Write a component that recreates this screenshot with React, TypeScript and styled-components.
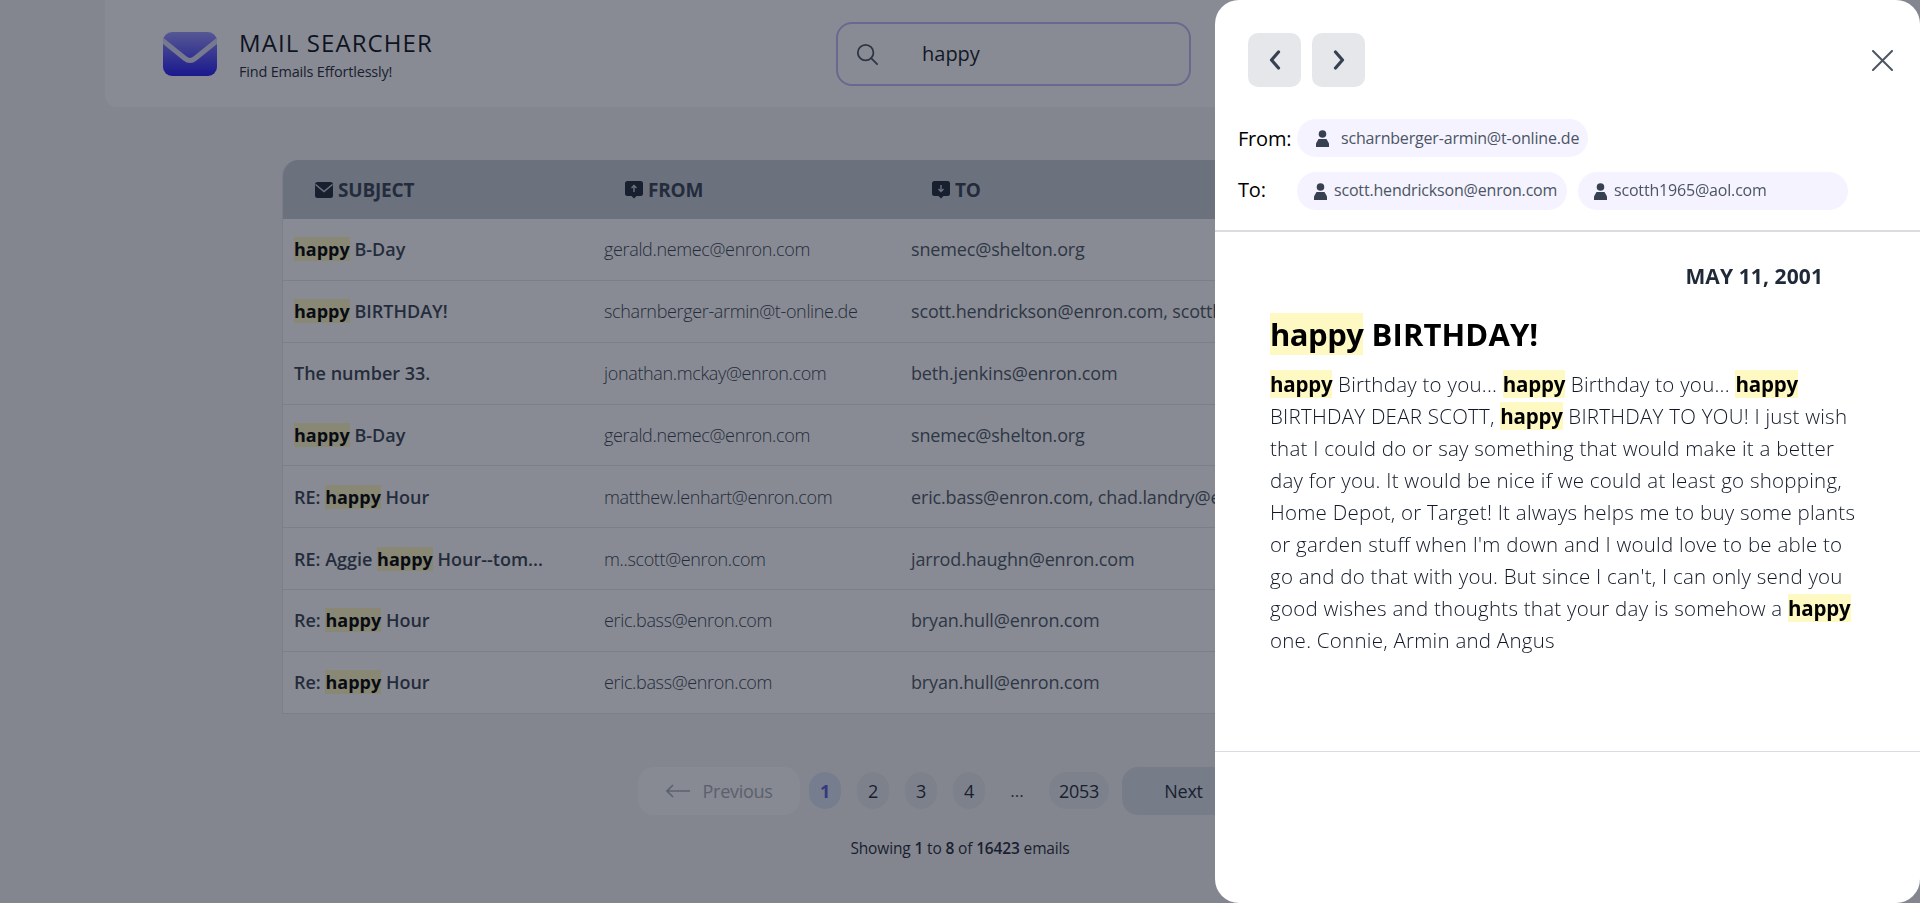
import React from 'react'
import styled, { createGlobalStyle } from 'styled-components'

const GlobalStyle = createGlobalStyle`
  html, body {
    margin: 0;
    height: 100%;
    overflow: hidden;
    background: #f5f5f7;
    font-family: 'Open Sans', 'Noto Sans', sans-serif;
    color: #374151;
  }
  * { box-sizing: border-box; }
`

const Page = styled.div`
  display: flex;
  flex-direction: column;
  align-items: center;
  height: 903px;
`

const TopBar = styled.header`
  width: 1710px;
  height: 107px;
  flex: none;
  display: flex;
  align-items: center;
  background: #fff;
  border-radius: 0 0 12px 12px;
  padding: 0 58px;
`

const Brand = styled.div`
  display: flex;
  align-items: center;
  gap: 22px;
  width: 673px;
`

const BrandText = styled.div`
  display: flex;
  flex-direction: column;
  gap: 4px;
  padding-top: 3px;
`

const BrandTitle = styled.div`
  font-size: 24px;
  line-height: 30px;
  font-weight: 500;
  letter-spacing: 1.1px;
  color: #0b0f19;
`

const BrandTagline = styled.div`
  font-size: 14.5px;
  line-height: 20px;
  letter-spacing: -0.2px;
  color: #1f2937;
`

const SearchBox = styled.div`
  width: 355px;
  height: 64px;
  display: flex;
  align-items: center;
  gap: 44px;
  padding-left: 18px;
  border: 2px solid #c0b9f5;
  border-radius: 16px;
  font-size: 20px;
  color: #111827;
  svg { flex: none; }
`

const TableCard = styled.section`
  width: 1356px;
  flex: none;
  margin-top: 53px;
  border-radius: 16px 16px 0 0;
  border-left: 1px solid #e5e7eb;
  overflow: hidden;
`

const columns = '310px 307px 1fr'

const HeadRow = styled.div`
  display: grid;
  grid-template-columns: ${columns};
  height: 59px;
  background: #c5ccd5;
  align-items: center;
`

const HeadCell = styled.div`
  display: flex;
  align-items: center;
  gap: 5px;
  padding: 1px 0 0 32px;
  font-size: 19px;
  font-weight: 700;
  letter-spacing: -0.2px;
  color: #374151;
`

const Row = styled.div`
  display: grid;
  grid-template-columns: ${columns};
  height: 61.85px;
  align-items: center;
  background: #fff;
  border-bottom: 1px solid #e5e7eb;
`

const SubjectCell = styled.div`
  padding-left: 11px;
  font-size: 18px;
  font-weight: 600;
  color: #374151;
  white-space: nowrap;
`

const Hit = styled.mark`
  background: #fef9c3;
  color: #000;
  font-weight: 700;
`

const FromCell = styled.div`
  padding-left: 11px;
  font-size: 18px;
  font-weight: 300;
  letter-spacing: -0.35px;
  color: #374151;
  white-space: nowrap;
`

const ToCell = styled.div`
  padding-left: 11px;
  font-size: 18px;
  letter-spacing: -0.16px;
  color: #4b5563;
  white-space: nowrap;
  overflow: hidden;
`

const Pager = styled.nav`
  display: flex;
  align-items: center;
  margin-top: 53px;
`

const PagerEdge = styled.div<{ $faded?: boolean }>`
  width: ${({ $faded }) => ($faded ? '162px' : '160px')};
  height: 48px;
  display: flex;
  align-items: center;
  justify-content: center;
  gap: 13px;
  font-size: 18px;
  letter-spacing: -0.3px;
  border-radius: 16px;
  background: ${({ $faded }) => ($faded ? '#fcfcfd' : '#dbe0e8')};
  color: ${({ $faded }) => ($faded ? '#a3aab5' : '#1f2937')};
`

const PageNumbers = styled.div`
  display: flex;
  align-items: center;
  gap: 16px;
  margin: 0 13px 0 9px;
`

const PagePill = styled.div<{ $active?: boolean }>`
  min-width: 32px;
  height: 37px;
  padding: 0 10px;
  display: flex;
  align-items: center;
  justify-content: center;
  border-radius: 18px;
  font-size: 18px;
  letter-spacing: -0.3px;
  font-weight: ${({ $active }) => ($active ? 700 : 400)};
  background: ${({ $active }) => ($active ? '#dbe3f7' : '#e9ebf0')};
  color: ${({ $active }) => ($active ? '#5b5bd0' : '#1f2937')};
`

const Ellipsis = styled.div`
  width: 32px;
  text-align: center;
  font-size: 17px;
  color: #374151;
`

const ShowingLine = styled.div`
  margin-top: 22px;
  font-size: 15.5px;
  letter-spacing: -0.15px;
  color: #1f2937;
  b { font-weight: 600; }
`

const Overlay = styled.div`
  position: fixed;
  inset: 0;
  background: rgba(17, 24, 39, 0.5);
`

const Drawer = styled.aside`
  position: fixed;
  top: 0;
  right: 0;
  bottom: 0;
  width: 705px;
  background: #fff;
  border-radius: 24px;
  display: flex;
  flex-direction: column;
`

const DrawerHead = styled.div`
  height: 232px;
  flex: none;
  border-bottom: 2px solid #d9dce1;
  padding: 33px 27px 0 23px;
  display: flex;
  flex-direction: column;
`

const NavRow = styled.div`
  display: flex;
  align-items: center;
  justify-content: space-between;
  padding-left: 10px;
`

const NavGroup = styled.div`
  display: flex;
  gap: 11px;
`

const NavButton = styled.div`
  width: 53px;
  height: 54px;
  background: #e5e7eb;
  border-radius: 10px;
  display: flex;
  align-items: center;
  justify-content: center;
`

const AddressRow = styled.div<{ $top: number }>`
  display: flex;
  align-items: center;
  height: 38px;
  margin-top: ${({ $top }) => $top}px;
`

const AddressLabel = styled.div<{ $lift?: number }>`
  width: 60px;
  flex: none;
  font-size: 20px;
  letter-spacing: -0.2px;
  color: #000;
  padding-bottom: ${({ $lift }) => $lift ?? 0}px;
`

const AddressChips = styled.div`
  display: flex;
  gap: 11px;
  margin-left: -1px;
`

const Chip = styled.div<{ $width: number; $gap: number; $pad: number }>`
  width: ${({ $width }) => $width}px;
  height: 38px;
  display: flex;
  align-items: center;
  gap: ${({ $gap }) => $gap}px;
  padding-left: ${({ $pad }) => $pad}px;
  background: #f5f3ff;
  border-radius: 19px;
  font-size: 16px;
  letter-spacing: -0.18px;
  color: #4b5563;
  white-space: nowrap;
  svg { flex: none; }
`

const ChipText = styled.span<{ $lift?: number }>`
  padding-bottom: ${({ $lift }) => $lift ?? 0}px;
`

const DrawerBody = styled.div`
  height: 520px;
  flex: none;
  border-bottom: 1px solid #d9dce1;
  padding: 30px 0 0 55px;
`

const MailDate = styled.div`
  width: 553px;
  text-align: right;
  font-size: 21px;
  line-height: 28px;
  font-weight: 700;
  letter-spacing: 0.1px;
  color: #1f2937;
`

const MailTitle = styled.h2`
  margin: 23px 0 0;
  font-size: 31px;
  line-height: 42px;
  font-weight: 700;
  letter-spacing: 0.1px;
  color: #000;
  mark { letter-spacing: -0.5px; }
`

const MailText = styled.p`
  margin: 13px 0 0;
  width: 592px;
  font-size: 20.5px;
  line-height: 32px;
  font-weight: 300;
  letter-spacing: 0.25px;
  color: #111827;
  mark { letter-spacing: -0.2px; }
`

const LogoMark = () => (
  <svg width="54" height="44" viewBox="0 0 54 44" fill="none">
    <defs>
      <linearGradient id="logoFill" x1="0" y1="0" x2="0" y2="1">
        <stop offset="0" stopColor="#9a97ff" />
        <stop offset="1" stopColor="#2318f5" />
      </linearGradient>
      <clipPath id="logoClip">
        <rect width="54" height="44" rx="9" />
      </clipPath>
    </defs>
    <rect width="54" height="44" rx="9" fill="url(#logoFill)" />
    <path
      d="M-1 8 L22 26.5 Q27 30.5 32 26.5 L55 8"
      stroke="#dcdcf5"
      strokeWidth="5"
      clipPath="url(#logoClip)"
    />
  </svg>
)

const SearchGlyph = () => (
  <svg width="22" height="22" viewBox="0 0 24 24" fill="none" stroke="#4b5563" strokeWidth="2" strokeLinecap="round">
    <circle cx="10.5" cy="10.5" r="8.5" />
    <path d="M16.5 16.5 L23 23" />
  </svg>
)

const MailGlyph = () => (
  <svg width="18" height="16" viewBox="0 0 18 16">
    <rect width="18" height="16" rx="2.5" fill="#1f2937" />
    <path d="M0.5 2.5 L9 9.5 L17.5 2.5" fill="none" stroke="#c5ccd5" strokeWidth="1.6" />
  </svg>
)

const BubbleGlyph = ({ down }: { down?: boolean }) => (
  <svg width="18" height="18" viewBox="0 0 18 18">
    <path d="M2.5 0 H15.5 A2.5 2.5 0 0 1 18 2.5 V12.5 A2.5 2.5 0 0 1 15.5 15 H11.5 L9 17.5 L6.5 15 H2.5 A2.5 2.5 0 0 1 0 12.5 V2.5 A2.5 2.5 0 0 1 2.5 0 Z" fill="#1f2937" />
    <path
      d={down ? 'M9 4 V10.5 M6.5 8 L9 10.5 L11.5 8' : 'M9 11 V4.5 M6.5 7 L9 4.5 L11.5 7'}
      fill="none"
      stroke="#c5ccd5"
      strokeWidth="1.4"
    />
  </svg>
)

const PersonGlyph = () => (
  <svg width="13" height="17" viewBox="0 0 13 17" fill="#374151">
    <circle cx="6.5" cy="4" r="3.8" />
    <path d="M2.5 9 H10.5 L13 13.5 V17 H0 V13.5 Z" />
  </svg>
)

const Chevron = ({ right }: { right?: boolean }) => (
  <svg width="14" height="20" viewBox="0 0 14 20" fill="none" stroke="#374151" strokeWidth="3.2" strokeLinecap="round" strokeLinejoin="round">
    <path d={right ? 'M3.5 2 L10.5 10 L3.5 18' : 'M10.5 2 L3.5 10 L10.5 18'} />
  </svg>
)

const CloseGlyph = () => (
  <svg width="21" height="21" viewBox="0 0 21 21" fill="none" stroke="#4b5563" strokeWidth="2" strokeLinecap="round">
    <path d="M1 1 L20 20 M20 1 L1 20" />
  </svg>
)

const ArrowGlyph = ({ right }: { right?: boolean }) => (
  <svg width="24" height="14" viewBox="0 0 24 14" fill="none" stroke={right ? '#1f2937' : '#a3aab5'} strokeWidth="1.6">
    <path d={right ? 'M0 7 H23 M17 1 L23 7 L17 13' : 'M24 7 H1 M7 1 L1 7 L7 13'} />
  </svg>
)

type MailRow = { subject: React.ReactNode; from: string; to: string }

const rows: MailRow[] = [
  { subject: <><Hit>happy</Hit> B-Day</>, from: 'gerald.nemec@enron.com', to: 'snemec@shelton.org' },
  { subject: <><Hit>happy</Hit> BIRTHDAY!</>, from: 'scharnberger-armin@t-online.de', to: 'scott.hendrickson@enron.com, scotth1965@aol.com' },
  { subject: 'The number 33.', from: 'jonathan.mckay@enron.com', to: 'beth.jenkins@enron.com' },
  { subject: <><Hit>happy</Hit> B-Day</>, from: 'gerald.nemec@enron.com', to: 'snemec@shelton.org' },
  { subject: <>RE: <Hit>happy</Hit> Hour</>, from: 'matthew.lenhart@enron.com', to: 'eric.bass@enron.com, chad.landry@enron.com' },
  { subject: <>RE: Aggie <Hit>happy</Hit> Hour--tom...</>, from: 'm..scott@enron.com', to: 'jarrod.haughn@enron.com' },
  { subject: <>Re: <Hit>happy</Hit> Hour</>, from: 'eric.bass@enron.com', to: 'bryan.hull@enron.com' },
  { subject: <>Re: <Hit>happy</Hit> Hour</>, from: 'eric.bass@enron.com', to: 'bryan.hull@enron.com' },
]

const App: React.FC = () => {
  return (
    <>
      <GlobalStyle />
      <Page>
        <TopBar>
          <Brand>
            <LogoMark />
            <BrandText>
              <BrandTitle>MAIL SEARCHER</BrandTitle>
              <BrandTagline>Find Emails Effortlessly!</BrandTagline>
            </BrandText>
          </Brand>
          <SearchBox>
            <SearchGlyph />
            happy
          </SearchBox>
        </TopBar>

        <TableCard>
          <HeadRow>
            <HeadCell><MailGlyph /> SUBJECT</HeadCell>
            <HeadCell><BubbleGlyph /> FROM</HeadCell>
            <HeadCell><BubbleGlyph down /> TO</HeadCell>
          </HeadRow>
          {rows.map((row, idx) => (
            <Row key={idx}>
              <SubjectCell>{row.subject}</SubjectCell>
              <FromCell>{row.from}</FromCell>
              <ToCell>{row.to}</ToCell>
            </Row>
          ))}
        </TableCard>

        <Pager>
          <PagerEdge $faded><ArrowGlyph /> Previous</PagerEdge>
          <PageNumbers>
            <PagePill $active>1</PagePill>
            <PagePill>2</PagePill>
            <PagePill>3</PagePill>
            <PagePill>4</PagePill>
            <Ellipsis>...</Ellipsis>
            <PagePill>2053</PagePill>
          </PageNumbers>
          <PagerEdge>Next <ArrowGlyph right /></PagerEdge>
        </Pager>
        <ShowingLine>
          Showing <b>1</b> to <b>8</b> of <b>16423</b> emails
        </ShowingLine>
      </Page>

      <Overlay />

      <Drawer>
        <DrawerHead>
          <NavRow>
            <NavGroup>
              <NavButton><Chevron /></NavButton>
              <NavButton><Chevron right /></NavButton>
            </NavGroup>
            <CloseGlyph />
          </NavRow>
          <AddressRow $top={32}>
            <AddressLabel>From:</AddressLabel>
            <AddressChips>
              <Chip $width={291} $gap={12} $pad={19}><PersonGlyph /> <ChipText>scharnberger-armin@t-online.de</ChipText></Chip>
            </AddressChips>
          </AddressRow>
          <AddressRow $top={15}>
            <AddressLabel $lift={3}>To:</AddressLabel>
            <AddressChips>
              <Chip $width={270} $gap={7} $pad={17}><PersonGlyph /> <ChipText $lift={3}>scott.hendrickson@enron.com</ChipText></Chip>
              <Chip $width={270} $gap={7} $pad={16}><PersonGlyph /> <ChipText $lift={3}>scotth1965@aol.com</ChipText></Chip>
            </AddressChips>
          </AddressRow>
        </DrawerHead>
        <DrawerBody>
          <MailDate>MAY 11, 2001</MailDate>
          <MailTitle><Hit>happy</Hit> BIRTHDAY!</MailTitle>
          <MailText>
            <Hit>happy</Hit> Birthday to you... <Hit>happy</Hit> Birthday to you... <Hit>happy</Hit> BIRTHDAY DEAR SCOTT,{' '}
            <Hit>happy</Hit> BIRTHDAY TO YOU! I just wish that I could do or say something that would make it a better
            day for you. It would be nice if we could at least go shopping, Home Depot, or Target! It always helps me to
            buy some plants or garden stuff when I'm down and I would love to be able to go and do that with you. But
            since I can't, I can only send you good wishes and thoughts that your day is somehow a <Hit>happy</Hit> one.
            Connie, Armin and Angus
          </MailText>
        </DrawerBody>
      </Drawer>
    </>
  )
}

export default App
